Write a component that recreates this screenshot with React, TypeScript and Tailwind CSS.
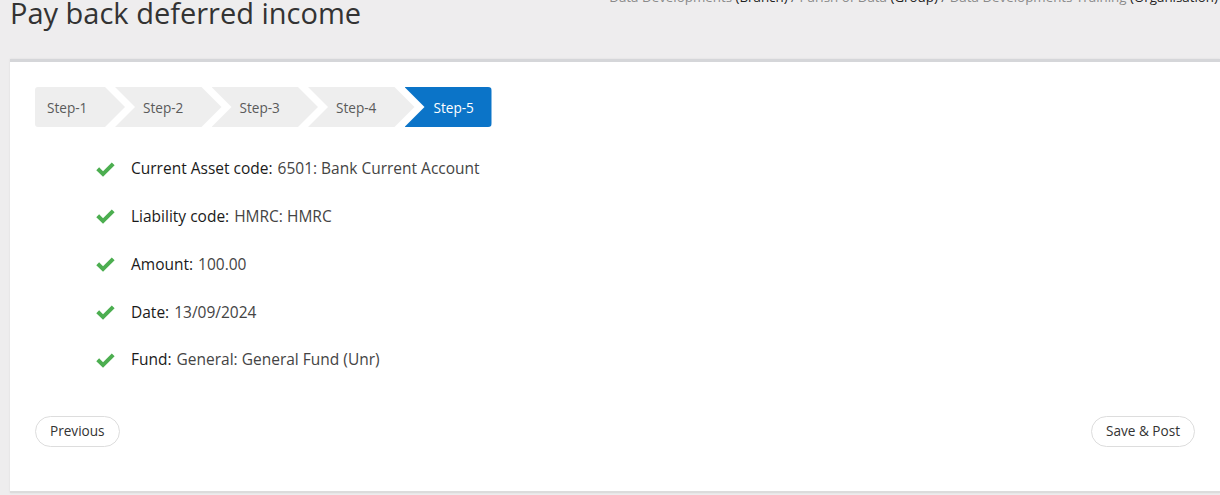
import React from "react";

const steps = ["Step-1", "Step-2", "Step-3", "Step-4", "Step-5"];

const rows: [string, string][] = [
  ["Current Asset code:", "6501: Bank Current Account"],
  ["Liability code:", "HMRC: HMRC"],
  ["Amount:", "100.00"],
  ["Date:", "13/09/2024"],
  ["Fund:", "General: General Fund (Unr)"],
];

function Check() {
  return (
    <svg viewBox="0 0 20 15" className="w-[19px] h-[15px] mr-[16px] shrink-0" aria-hidden>
      <path d="M0.3 8.2 L3.3 5.2 L7.4 9.3 L16.6 0.1 L19.6 3.1 L7.4 15 Z" fill="#4cae50" />
    </svg>
  );
}

export default function App() {
  return (
    <div
      className="min-h-[495px] bg-[#eeedee] pl-[10px] overflow-hidden"
      style={{ fontFamily: '"Open Sans", "Noto Sans", sans-serif' }}
    >
      <div className="flex items-start justify-between h-[62px] -mt-[3px]">
        <h1 className="text-[29px] leading-[31px] text-[#333] font-normal">Pay back deferred income</h1>
        <div className="-mt-[9px] text-[13.35px] leading-[18px] pr-[2px] whitespace-nowrap">
          <span className="text-[#8a8a8a]">Data Developments</span>{" "}
          <span className="text-[#222]">(Branch)</span>
          <span className="text-[#555]"> / </span>
          <span className="text-[#8a8a8a]">Parish of Data</span>{" "}
          <span className="text-[#222]">(Group)</span>
          <span className="text-[#555]"> / </span>
          <span className="text-[#8a8a8a]">Data Developments Training</span>{" "}
          <span className="text-[#222]">(Organisation)</span>
        </div>
      </div>
      <div className="bg-white border-t-[3px] border-[#d5d6d9] border-b-2 border-b-[#dcdcdc] shadow-[0_0_2px_rgba(0,0,0,0.08)] px-[25px] pt-[25px] pb-[44px]">
        <div className="flex h-[40px]">
          {steps.map((s, i) => {
            const first = i === 0;
            const last = i === steps.length - 1;
            const cls = first
              ? "w-[90px] pl-[12px] bg-[#eeeeee] text-[#5a5a5a] [clip-path:polygon(0_0,calc(100%-20px)_0,100%_50%,calc(100%-20px)_100%,0_100%)] rounded-l-[3px]"
              : last
              ? "w-[87px] -ml-[10px] pl-[29px] bg-[#0b74c8] text-white rounded-r-[4px] [clip-path:polygon(0_0,100%_0,100%_100%,0_100%,20px_50%)]"
              : "w-[106.5px] -ml-[10px] pl-[28px] bg-[#eeeeee] text-[#5a5a5a] [clip-path:polygon(0_0,calc(100%-20px)_0,100%_50%,calc(100%-20px)_100%,0_100%,20px_50%)]";
            return (
              <div key={s} className={`h-[40px] pt-[2px] flex items-center text-[13.6px] ${cls}`}>
                {s}
              </div>
            );
          })}
        </div>
        <div className="mt-[30px] pl-[61px] flex flex-col gap-[23.75px]">
          {rows.map(([l, v]) => (
            <div key={l} className="flex items-center h-[24px] text-[15.5px]">
              <Check />
              <span className="font-medium text-[#1a1a1a]">{l}</span>
              <span className="text-[#444] ml-[5px]">{v}</span>
            </div>
          ))}
        </div>
        <div className="mt-[44px] flex justify-between">
          <button className="h-[31px] px-[14px] rounded-full border border-[#dddddd] text-[13.6px] text-[#333] bg-white">
            Previous
          </button>
          <button className="h-[31px] px-[14px] rounded-full border border-[#dddddd] text-[13.6px] text-[#333] bg-white">
            Save &amp; Post
          </button>
        </div>
      </div>
    </div>
  );
}
